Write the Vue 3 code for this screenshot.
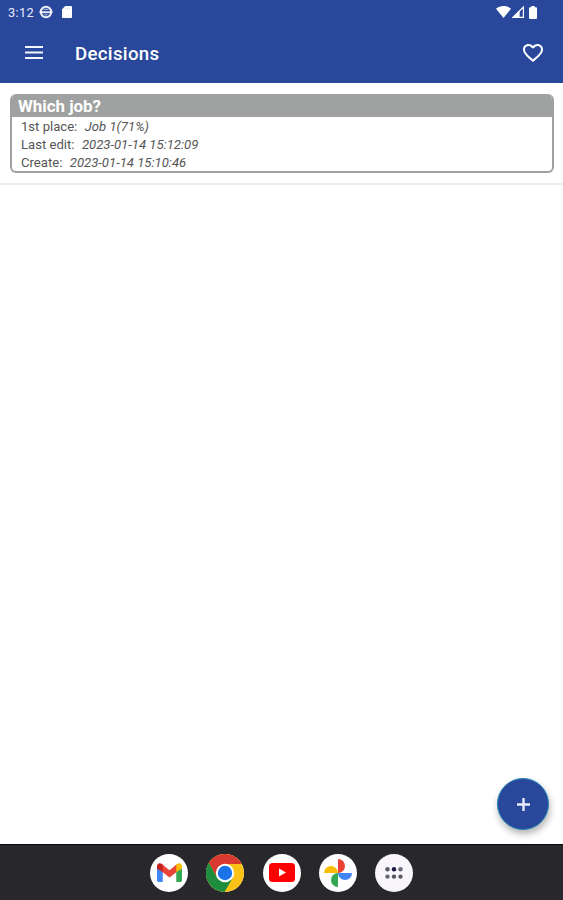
<template>
  <div class="screen">
    <header class="top">
      <div class="status">
        <span class="clock">{{ clock }}</span>
        <svg class="globe" width="14" height="14" viewBox="0 0 14 14">
          <circle cx="7" cy="7" r="5.200" fill="none" stroke="#eef1fb" stroke-width="2" />
          <path d="M.5 7.200H13.500" stroke="#eef1fb" stroke-width="1.800" />
          <path d="M4.500 4.300h5M5.500 9.800h3" stroke="#c5cee9" stroke-width="1" />
        </svg>
        <svg class="sd" width="10" height="12" viewBox="0 0 10 12">
          <path d="M3.300 0H9a1 1 0 0 1 1 1v10a1 1 0 0 1-1 1H1a1 1 0 0 1-1-1V3.300z" fill="#fff" />
          <path d="M3.500 1.800v1.500M5.500 1.800v1.500M7.500 1.800v1.500" stroke="#c9d1ea" stroke-width=".8" />
        </svg>
        <span class="spacer"></span>
        <svg width="15" height="12" viewBox="0 0 15 12">
          <path d="M0 2.800C4.200-.8 10.800-.8 15 2.800L7.500 12z" fill="#fff" />
        </svg>
        <svg class="signal" width="12" height="12" viewBox="0 0 12 12">
          <path d="M11.400 1V11.400H1z" fill="none" stroke="#fff" stroke-width="1.200" />
          <path d="M0 12L7.600 4.400V12z" fill="#fff" />
        </svg>
        <svg class="battery" width="8" height="13" viewBox="0 0 8 13">
          <path d="M2.300 0h3.400v1.300H7a1 1 0 0 1 1 1V12a1 1 0 0 1-1 1H1a1 1 0 0 1-1-1V2.300a1 1 0 0 1 1-1h1.300z" fill="#fff" />
        </svg>
      </div>
      <div class="toolbar">
        <svg class="menu" width="18" height="13" viewBox="0 0 18 13">
          <path d="M0 1H18M0 6.500H18M0 12H18" stroke="#f4f6fd" stroke-width="1.900" />
        </svg>
        <h1>Decisions</h1>
        <span class="spacer"></span>
        <svg width="20" height="18" viewBox="2 3 20 18.350" preserveAspectRatio="none">
          <path fill="#fff" d="M16.500 3c-1.740 0-3.410.81-4.500 2.090C10.910 3.810 9.240 3 7.500 3 4.420 3 2 5.420 2 8.500c0 3.780 3.400 6.860 8.550 11.540L12 21.350l1.450-1.320C18.600 15.360 22 12.280 22 8.500 22 5.420 19.580 3 16.500 3zm-4.400 15.550l-.1.100-.1-.1C7.140 14.240 4 11.390 4 8.500 4 6.500 5.500 5 7.500 5c1.540 0 3.040.99 3.570 2.360h1.870C13.460 5.990 14.960 5 16.500 5c2 0 3.500 1.500 3.500 3.500 0 2.890-3.140 5.740-7.900 10.050z" />
        </svg>
      </div>
    </header>

    <main>
      <div v-for="item in decisions" :key="item.title" class="item">
        <div class="card">
          <h2>{{ item.title }}</h2>
          <p v-for="row in item.rows" :key="row.label">
            <span>{{ row.label }}</span><em>{{ row.value }}</em>
          </p>
        </div>
      </div>
      <button class="fab" aria-label="Add">
        <svg width="13" height="13" viewBox="0 0 13 13">
          <path d="M6.500 0V13M0 6.500H13" stroke="#e6eafa" stroke-width="2.400" />
        </svg>
      </button>
    </main>

    <nav class="dock">
      <span class="app">
        <svg width="25" height="19" viewBox="0 0 26 20" preserveAspectRatio="none">
          <path d="M0 5v13.500Q0 20 1.500 20H6V9z" fill="#4285f4" />
          <path d="M20 9V20h4.500Q26 20 26 18.500V5z" fill="#34a853" />
          <path d="M5 1L13 7.500 21 1v8l-8 6.300L5 9z" fill="#ea4335" />
          <path d="M0 3.500C0 .3 3-.8 5.200 1L6 1.700V9.500L0 6z" fill="#c5221f" />
          <path d="M26 3.500C26 .3 23-.8 20.800 1L20 1.700V9.500L26 6z" fill="#fbbc04" />
        </svg>
      </span>
      <span class="app">
        <svg width="38" height="38" viewBox="0 0 38 38">
          <circle cx="19" cy="19" r="19" fill="#fbc116" />
          <path d="M19 10H35.700A19 19 0 0 0 2.800 9L11.200 23.500z" fill="#d93a2f" />
          <path d="M2.800 9A19 19 0 0 0 18.500 38L27 23.500 19 28 11.200 23.500z" fill="#1e8e3e" />
          <circle cx="19" cy="19" r="9.200" fill="#fff" />
          <circle cx="19" cy="19" r="7.200" fill="#1a73e8" />
        </svg>
      </span>
      <span class="app">
        <svg width="26" height="19" viewBox="0 0 26 19">
          <rect width="26" height="19" rx="3.500" fill="#f00" />
          <path d="M10 5.500v8l7-4z" fill="#fff" />
        </svg>
      </span>
      <span class="app">
        <svg width="28" height="28" viewBox="0 0 28 28">
          <path d="M14 0a7 7 0 0 1 0 14z" fill="#ea4335" />
          <path d="M28 14a7 7 0 0 1-14 0z" fill="#4285f4" />
          <path d="M14 28a7 7 0 0 1 0-14z" fill="#34a853" />
          <path d="M0 14a7 7 0 0 1 14 0z" fill="#fbbc04" />
        </svg>
      </span>
      <span class="app drawer">
        <svg width="18" height="12" viewBox="0 0 18 12">
          <circle v-for="(dot, i) in dots" :key="i" :cx="dot.x" :cy="dot.y" r="2.200" :fill="dot.color" />
        </svg>
      </span>
    </nav>
  </div>
</template>

<script setup>
const clock = '3:12'

const decisions = [
  {
    title: 'Which job?',
    rows: [
      { label: '1st place:', value: 'Job 1(71%)' },
      { label: 'Last edit:', value: '2023-01-14 15:12:09' },
      { label: 'Create:', value: '2023-01-14 15:10:46' }
    ]
  }
]

const dots = [
  { x: 2.5, y: 2.2, color: '#5c5a66' },
  { x: 9, y: 2.2, color: '#1f1b45' },
  { x: 15.5, y: 2.2, color: '#6f6c7c' },
  { x: 2.5, y: 9.6, color: '#67656f' },
  { x: 9, y: 9.6, color: '#56545f' },
  { x: 15.5, y: 9.6, color: '#5d5b66' }
]
</script>

<style>
body {
  margin: 0;
}
</style>

<style scoped>
.screen {
  display: flex;
  flex-direction: column;
  height: 900px;
  background: #fff;
  font-family: Roboto, "Liberation Sans", sans-serif;
}

.top {
  height: 83px;
  background: #29479b;
  color: #fff;
}

.status {
  display: flex;
  align-items: center;
  height: 24px;
  padding: 0 26px 0 8px;
}

.clock {
  width: 31px;
  font-size: 12.8px;
  letter-spacing: 0.3px;
  color: #e6eafa;
}

.sd {
  margin-left: 9px;
}

.spacer {
  flex: 1;
}

.signal {
  margin-left: 1px;
}

.battery {
  margin-left: 5px;
}

.toolbar {
  display: flex;
  align-items: center;
  height: 58px;
  padding: 0 20px 0 25px;
}

.menu {
  margin-bottom: 1px;
}

h1 {
  margin: 2px 0 0 32px;
  font-size: 18.7px;
  font-weight: 500;
  letter-spacing: 0.3px;
}

main {
  position: relative;
  flex: 1;
}

.item {
  height: 102px;
  padding: 11px 9px 0 10px;
  box-sizing: border-box;
  border-bottom: 2px solid #ececec;
}

.card {
  height: 78.5px;
  box-sizing: border-box;
  border: 2px solid #a0a2a1;
  border-top: 0;
  border-radius: 6px;
  overflow: hidden;
}

h2 {
  height: 23px;
  margin: 0 0 1px;
  padding-left: 6px;
  background: #a0a2a1;
  color: #fff;
  font-size: 16.9px;
  font-weight: 700;
  line-height: 25px;
}

p {
  margin: 0;
  padding-left: 9px;
  color: #555;
  font-size: 13.1px;
  line-height: 18px;
}

em {
  margin-left: 7.5px;
}

.fab {
  position: absolute;
  right: 14px;
  bottom: 14px;
  display: flex;
  align-items: center;
  justify-content: center;
  width: 52px;
  height: 52px;
  padding: 0;
  border: 1px solid #2385b8;
  border-radius: 50%;
  background: #29479b;
  box-shadow: 1px 4px 7px rgba(0, 0, 0, 0.3);
}

.dock {
  display: flex;
  align-items: center;
  justify-content: center;
  gap: 18.2px;
  height: 56px;
  box-sizing: border-box;
  border-top: 1px solid #08080a;
  background: #28272c;
}

.app {
  display: flex;
  align-items: center;
  justify-content: center;
  width: 38px;
  height: 38px;
  border-radius: 50%;
  background: #fff;
}

.drawer {
  background: #f8f5fb;
}
</style>
